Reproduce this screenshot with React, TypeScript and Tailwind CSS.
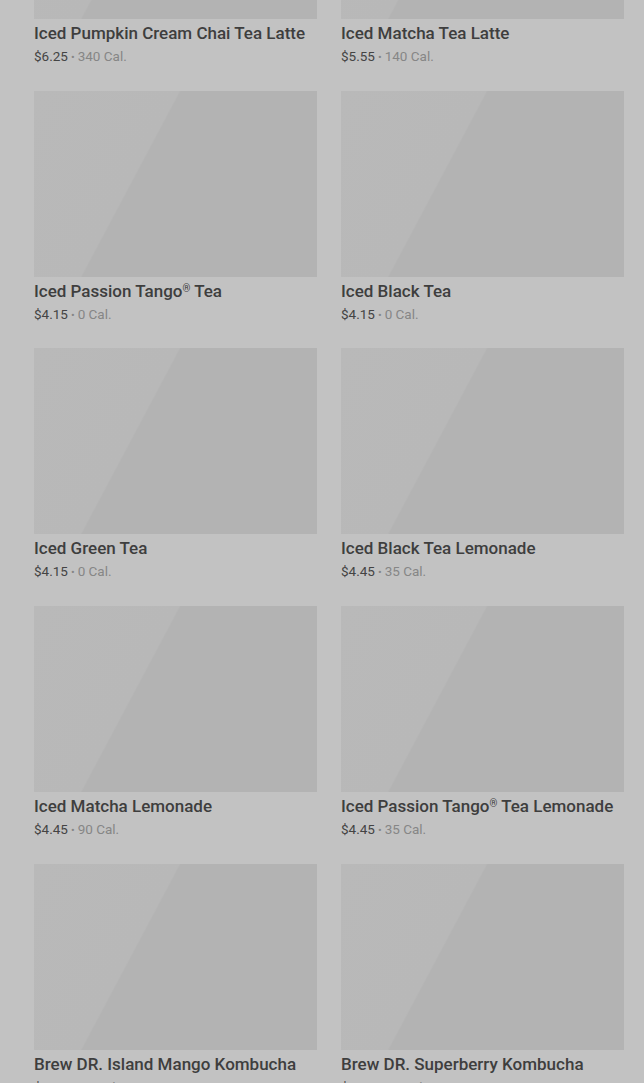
import React from 'react';

type Drink = {
    name: string;
    price: string;
    cal: string;
};

const drinks: Drink[] = [
    { name: 'Iced Pumpkin Cream Chai Tea Latte', price: '$6.25', cal: '340 Cal.' },
    { name: 'Iced Matcha Tea Latte', price: '$5.55', cal: '140 Cal.' },
    { name: 'Iced Passion Tango® Tea', price: '$4.15', cal: '0 Cal.' },
    { name: 'Iced Black Tea', price: '$4.15', cal: '0 Cal.' },
    { name: 'Iced Green Tea', price: '$4.15', cal: '0 Cal.' },
    { name: 'Iced Black Tea Lemonade', price: '$4.45', cal: '35 Cal.' },
    { name: 'Iced Matcha Lemonade', price: '$4.45', cal: '90 Cal.' },
    { name: 'Iced Passion Tango® Tea Lemonade', price: '$4.45', cal: '35 Cal.' },
    { name: 'Brew DR. Island Mango Kombucha', price: '$4.95', cal: '30 Cal.' },
    { name: 'Brew DR. Superberry Kombucha', price: '$4.95', cal: '30 Cal.' },
];

// render the ® mark small and raised, like the menu does
const Name: React.FC<{ text: string }> = ({ text }) => {
    const parts = text.split('®');
    return (
        <>
            {parts.map((part, i) => (
                <React.Fragment key={i}>
                    {part}
                    {i < parts.length - 1 && (
                        <span className="relative -top-[5px] text-[10px]">®</span>
                    )}
                </React.Fragment>
            ))}
        </>
    );
};

const DrinkCard: React.FC<{ drink: Drink }> = ({ drink }) => (
    <div className="flex flex-col">
        <div className="h-[186px] w-full shrink-0 bg-[linear-gradient(118deg,#b9b9b9_0%,#b8b8b8_38%,#b3b3b3_38.5%,#b3b3b3_100%)]" />
        <h3 className="h-[27px] shrink-0 pt-[2px] text-[17px] leading-6 font-medium text-[#3e3e3e] whitespace-nowrap">
            <Name text={drink.name} />
        </h3>
        <p className="flex h-[21px] shrink-0 items-baseline text-[13.5px] leading-5 text-[#868686] whitespace-nowrap">
            <span className="text-[#444444]">{drink.price}</span>
            <span className="mx-[3px] text-[11px]">•</span>
            <span>{drink.cal}</span>
        </p>
    </div>
);

export default function App() {
    return (
        <div
            className="h-[1083px] overflow-hidden bg-[#c2c2c2]"
            style={{ fontFamily: 'Roboto, "Liberation Sans", sans-serif' }}
        >
            <div className="-mt-[167px] grid grid-cols-2 gap-x-6 gap-y-[23.7px] pl-[34px] pr-[20px]">
                {drinks.map((drink, index) => (
                    <DrinkCard key={index} drink={drink} />
                ))}
            </div>
        </div>
    );
}
